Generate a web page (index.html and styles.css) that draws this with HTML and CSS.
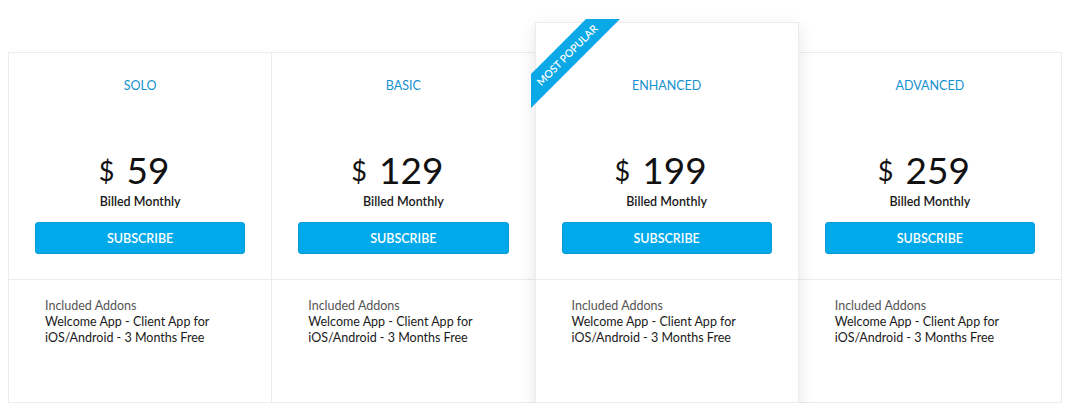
FILE: index.html
```html
<!DOCTYPE html>
<html>
<head>
<meta charset="utf-8">
<link rel="stylesheet" href="styles.css">
</head>
<body>
<div class="pricing">
  <div class="plan">
    <div class="plan-top">
      <div class="plan-name">SOLO</div>
      <div class="price"><span class="cur">$</span><span class="amt">59</span></div>
      <div class="billed">Billed Monthly</div>
      <button class="btn">SUBSCRIBE</button>
    </div>
    <div class="plan-features">
      <div class="feat-label">Included Addons</div>
      <div class="feat-text">Welcome App - Client App for iOS/Android - 3 Months Free</div>
    </div>
  </div>
  <div class="plan">
    <div class="plan-top">
      <div class="plan-name">BASIC</div>
      <div class="price"><span class="cur">$</span><span class="amt">129</span></div>
      <div class="billed">Billed Monthly</div>
      <button class="btn">SUBSCRIBE</button>
    </div>
    <div class="plan-features">
      <div class="feat-label">Included Addons</div>
      <div class="feat-text">Welcome App - Client App for iOS/Android - 3 Months Free</div>
    </div>
  </div>
  <div class="plan featured">
    <div class="ribbon"><span class="ribbon-band">MOST POPULAR</span></div>
    <div class="plan-top">
      <div class="plan-name">ENHANCED</div>
      <div class="price"><span class="cur">$</span><span class="amt">199</span></div>
      <div class="billed">Billed Monthly</div>
      <button class="btn">SUBSCRIBE</button>
    </div>
    <div class="plan-features">
      <div class="feat-label">Included Addons</div>
      <div class="feat-text">Welcome App - Client App for iOS/Android - 3 Months Free</div>
    </div>
  </div>
  <div class="plan">
    <div class="plan-top">
      <div class="plan-name">ADVANCED</div>
      <div class="price"><span class="cur">$</span><span class="amt">259</span></div>
      <div class="billed">Billed Monthly</div>
      <button class="btn">SUBSCRIBE</button>
    </div>
    <div class="plan-features">
      <div class="feat-label">Included Addons</div>
      <div class="feat-text">Welcome App - Client App for iOS/Android - 3 Months Free</div>
    </div>
  </div>
</div>
</body>
</html>
```
FILE: styles.css
```css
* { box-sizing: border-box; }
html, body { margin: 0; padding: 0; background: #ffffff; }
body {
  font-family: "Lato", "Noto Sans", sans-serif;
  color: #111;
}
.pricing {
  margin: 52px 8px 0;
  display: grid;
  grid-template-columns: repeat(4, 1fr);
  border-top: 1px solid #ececec;
  border-left: 1px solid #ececec;
}
.plan {
  display: flex;
  flex-direction: column;
  border-right: 1px solid #ececec;
  border-bottom: 1px solid #ececec;
  background: #fff;
  height: 350px;
}
.plan.featured {
  position: relative;
  z-index: 2;
  margin-top: -31px;
  height: 381px;
  padding-top: 30px;
  border: 1px solid #ececec;
  margin-left: -1px;
  box-shadow: 0 6px 16px rgba(0, 0, 0, 0.11);
}
.plan-top {
  height: 227px;
  padding: 25px 26px 0;
  border-bottom: 1px solid #ececec;
  text-align: center;
}
.plan-name {
  color: #1491d0;
  font-size: 12.5px;
  line-height: 16px;
}
.price {
  margin-top: 54px;
  height: 44px;
  line-height: 44px;
  color: #111;
  display: flex;
  justify-content: center;
  align-items: center;
  gap: 12px;
  padding-right: 12px;
}
.cur {
  font-size: 27px;
  margin-top: 1px;
}
.amt {
  font-size: 37px;
}
.billed {
  margin-top: 2px;
  font-size: 12.5px;
  line-height: 16px;
  font-weight: 600;
  color: #1a1a1a;
}
.btn {
  display: block;
  width: 100%;
  margin-top: 12px;
  height: 32px;
  border: 1px solid #0a9bd4;
  border-radius: 3px;
  background: #00aaea;
  color: #fff;
  font-family: inherit;
  font-size: 12.5px;
  font-weight: 600;
  cursor: pointer;
}
.plan-features {
  padding: 18px 36px 0;
  font-size: 12.5px;
  line-height: 16px;
}
.feat-label {
  color: #555;
}
.feat-text {
  color: #1a1a1a;
  max-width: 175px;
}
.ribbon {
  position: absolute;
  left: -5px;
  top: -4px;
  width: 90px;
  height: 90px;
  overflow: hidden;
}
.ribbon-band {
  position: absolute;
  left: -34px;
  top: 24px;
  width: 140px;
  height: 24px;
  line-height: 24px;
  transform: rotate(-45deg);
  background: #0aa8e6;
  color: #fff;
  font-size: 10.5px;
  font-weight: 600;
  text-align: center;
}
```
